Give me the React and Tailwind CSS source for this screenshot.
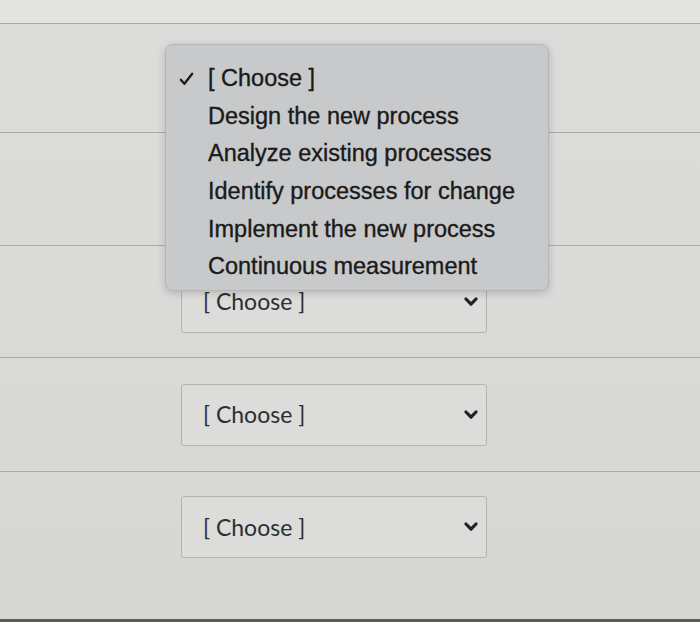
import React from 'react';

const options = [
  'Design the new process',
  'Analyze existing processes',
  'Identify processes for change',
  'Implement the new process',
  'Continuous measurement',
];

// row heights between the grey rules; the first two rows sit under the open menu
const rows = [
  { h: 'h-[109px]', select: false },
  { h: 'h-[113px]', select: false },
  { h: 'h-[112px]', select: true },
  { h: 'h-[114px]', select: true },
  { h: 'h-[140px]', select: true, last: true },
];

const Chevron = () => (
  <svg width="14" height="10" viewBox="0 0 14 10" className="shrink-0">
    <polyline points="2,2 7,7.2 12,2" fill="none" stroke="#1f2329" strokeWidth="3.2" strokeLinecap="round" strokeLinejoin="round" />
  </svg>
);

const Check = () => (
  <svg width="15" height="14" viewBox="0 0 15 14" className="absolute left-[13px] top-[12px]">
    <polyline points="1.8,7.8 5.4,11.8 13.2,1.8" fill="none" stroke="#1a1a1a" strokeWidth="2.3" strokeLinecap="round" strokeLinejoin="round" />
  </svg>
);

const SelectBox = () => (
  <div className="w-[306px] h-[62px] rounded-[3px] border border-[#b3b3b1] bg-[#dcdcda] flex items-center justify-between pl-[21px] pr-[8px]">
    <span className="text-[23px] text-[#2b2f33] font-['Lato',sans-serif]">[ Choose ]</span>
    <Chevron />
  </div>
);

export default function App() {
  return (
    <div className="relative w-[700px] h-[622px] overflow-hidden bg-gradient-to-b from-[#dcdcda] via-[#dadad8] to-[#d6d6d3]">
      <div className="h-[24px] bg-[#e3e3e1] border-b border-[#a7a7a5]" />
      {rows.map((r, i) => (
        <div
          key={i}
          className={`${r.h} flex pl-[181px] ${r.last ? 'items-start pt-[24px]' : 'items-center border-b border-[#a9a9a7]'}`}
        >
          {r.select && <SelectBox />}
        </div>
      ))}
      <div className="absolute left-0 right-0 bottom-0 h-[3px] bg-[#5a5a58]" />

      {/* open native menu */}
      <div className="absolute left-[165px] top-[44px] w-[384px] h-[247px] rounded-[8px] bg-[#c8c9ca] border border-[#b5b6b8] shadow-[0_2px_8px_rgba(0,0,0,0.18)] pt-[15px] font-['Liberation_Sans',sans-serif] text-[#1a1a1a] [-webkit-text-stroke:0.35px_#1a1a1a]">
        <div className="h-[37.6px] flex items-center relative pl-[42px]">
          <Check />
          <span className="text-[23.5px]">[ Choose ]</span>
        </div>
        {options.map((o) => (
          <div key={o} className="h-[37.6px] flex items-center pl-[42px]">
            <span className="text-[23.5px]">{o}</span>
          </div>
        ))}
      </div>
    </div>
  );
}
